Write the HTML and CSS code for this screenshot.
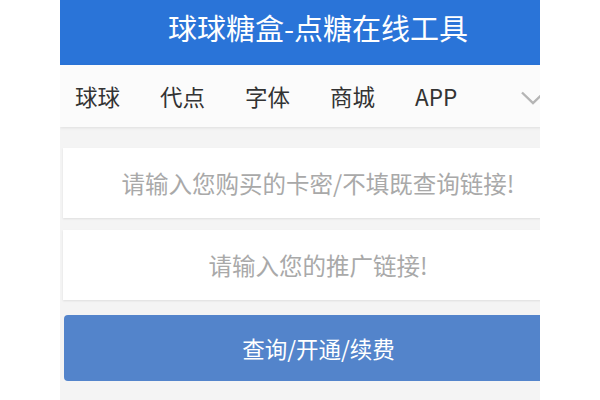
FILE: index.html
```html
<!DOCTYPE html>
<html lang="zh">
<head>
<meta charset="utf-8">
<title>球球糖盒-点糖在线工具</title>
<link rel="stylesheet" href="styles.css">
</head>
<body>
<div class="frame">
  <div class="page">
    <header class="header">球球糖盒-点糖在线工具</header>
    <nav class="nav">
      <a class="nav-item">球球</a>
      <a class="nav-item">代点</a>
      <a class="nav-item">字体</a>
      <a class="nav-item">商城</a>
      <a class="nav-item">APP</a>
      <span class="nav-more">
        <svg width="24" height="14" viewBox="0 0 24 14"><polyline points="1,1.5 12,12 23,1.5" fill="none" stroke="#b5b5b5" stroke-width="2.4"/></svg>
      </span>
    </nav>
    <main class="main">
      <input class="field" type="text" placeholder="请输入您购买的卡密/不填既查询链接!">
      <input class="field field-second" type="text" placeholder="请输入您的推广链接!">
      <button class="btn">查询/开通/续费</button>
    </main>
  </div>
</div>
</body>
</html>
```
FILE: styles.css
```css
html, body {
  margin: 0;
  padding: 0;
  background: #ffffff;
  font-family: "Noto Sans CJK SC", "Noto Sans", sans-serif;
}
.frame {
  margin-left: 60px;
  width: 480px;
  height: 400px;
  overflow: hidden;
  background: #f4f4f4;
}
.page {
  width: 516px;
}
.header {
  height: 65px;
  background: #2a74d8;
  color: #ffffff;
  font-size: 29px;
  line-height: 55px;
  text-align: center;
}
.nav {
  height: 62px;
  background: #fbfbfb;
  display: flex;
  align-items: center;
  padding-left: 15px;
  gap: 40px;
  box-shadow: 0 1px 3px rgba(0, 0, 0, 0.09);
  position: relative;
}
.nav-item {
  font-size: 22.5px;
  color: #333333;
  line-height: 1;
}
.nav-more {
  margin-left: auto;
  margin-right: 31px;
  display: flex;
  align-items: center;
  padding-top: 3px;
}
.main {
  padding: 21px 3px 0 3px;
  display: flex;
  flex-direction: column;
}
.field {
  display: block;
  box-sizing: border-box;
  width: 100%;
  height: 70px;
  border: none;
  outline: none;
  background: #ffffff;
  box-shadow: 0 1px 2px rgba(0, 0, 0, 0.09);
  text-align: center;
  font-family: inherit;
  font-size: 23.5px;
  color: #333333;
  padding: 0;
  margin: 0;
}
.field::placeholder {
  color: #a9a9a9;
}
.field-second {
  margin-top: 12px;
}
.btn {
  margin-top: 15px;
  margin-left: 1px;
  height: 66px;
  border: none;
  border-radius: 4px;
  background: #5384cb;
  color: #ffffff;
  font-family: inherit;
  font-size: 22.5px;
  padding: 0;
}
```
